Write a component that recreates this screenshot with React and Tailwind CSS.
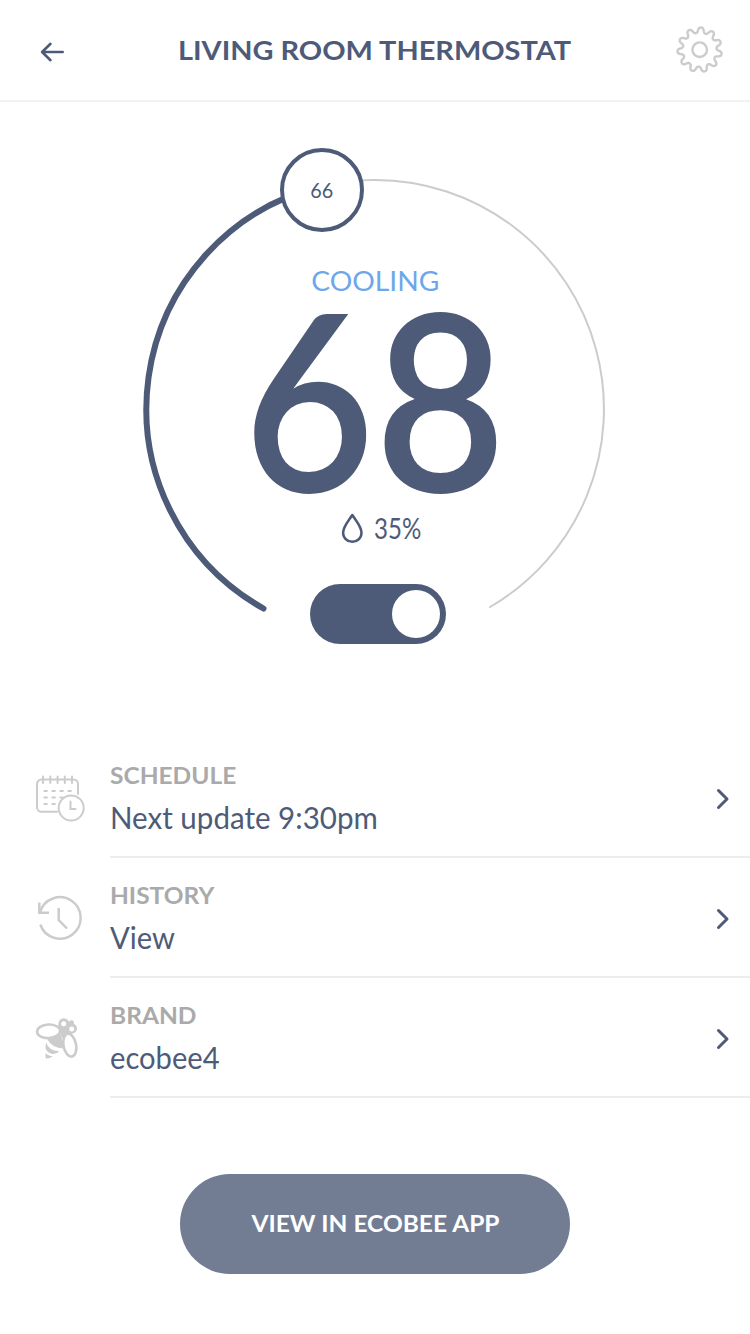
import React from "react";

function BackArrow() {
  return (
    <svg width="26" height="22" viewBox="0 0 26 22" fill="none" stroke="#4e5b78" strokeWidth="2.6" strokeLinecap="round" strokeLinejoin="round">
      <path d="M23.700 11H3.500M11.500 2.800L3.100 11L11.500 19.200" />
    </svg>
  );
}

function gearPath() {
  const pts = [];
  for (let i = 0; i <= 264; i++) {
    const t = (i / 264) * Math.PI * 2;
    const wave = Math.cos(11 * t);
    const r = 19.6 + 2.7 * wave;
    const a = t - Math.PI / 2 + 0.06 + 0.02 * Math.sin(22 * t);
    pts.push(`${(23.7 + r * Math.cos(a)).toFixed(2)} ${(23.7 + r * Math.sin(a)).toFixed(2)}`);
  }
  return "M" + pts.join("L") + "Z";
}

function Gear() {
  return (
    <svg width="48" height="48" viewBox="0 0 48 48" fill="none" stroke="#cccccc" strokeWidth="2.4" strokeLinejoin="round">
      <path d={gearPath()} />
      <circle cx="23.700" cy="23.700" r="7.300" />
    </svg>
  );
}

function CalendarIcon() {
  return (
    <svg width="50" height="50" viewBox="0 0 50 50" fill="none" stroke="#cccccc" strokeWidth="2" strokeLinecap="round">
      <path d="M22 36.800H6.500a4.500 4.500 0 0 1-4.500-4.500V9A4.500 4.500 0 0 1 6.500 4.500H38.500A4.500 4.500 0 0 1 43 9V19" />
      <path d="M8 1.500V8M15.300 1.500V8M22.600 1.500V8M29.800 1.500V8M37 1.500V8" />
      <path d="M9.300 16h2.600M17.300 16h2.600M25.300 16h2.600M33.300 16h2.600M9.300 22.500h2.600M17.300 22.500h2.600M25.300 22.500h2.600M9.300 29h2.600M17.300 29h2.600" />
      <circle cx="36.200" cy="33" r="12.500" fill="white" />
      <path d="M35.500 26.500V34h5" />
    </svg>
  );
}

function HistoryIcon() {
  return (
    <svg width="50" height="50" viewBox="0 0 50 50" fill="none" stroke="#cccccc" strokeWidth="2.500">
      <path d="M5 17.300A20.700 20.700 0 1 1 5.300 29.500" />
      <path d="M4.300 7.500V17.700H14" />
      <path d="M23.700 13V25L32 33.500" />
    </svg>
  );
}

function BeeIcon() {
  return (
    <svg width="50" height="50" viewBox="0 0 50 50" fill="#cccccc">
      <circle cx="28.800" cy="8.500" r="5.300" />
      <circle cx="37" cy="13.500" r="5" />
      <circle cx="36.500" cy="7.700" r="2.500" />
      <path d="M23 10L30 5L38 8L40 17L35 20L27 23Z" />
      <circle cx="28.700" cy="8.700" r="2.500" fill="white" />
      <circle cx="36.700" cy="14" r="2.500" fill="white" />
      <path d="M12.500 24.500L26 19L28.500 33.500Q17 33 12.500 24.500Z" />
      <path d="M11.300 27.700Q13.500 35.500 24.300 36.200Q20 40.500 14.500 38Q8.500 34.500 11.300 27.700Z" />
      <path d="M10.800 38Q13 41 17.800 41.300Q15 43.500 11 43.500Q9.800 41 10.800 38Z" />
      <ellipse cx="13.600" cy="16.300" rx="11.500" ry="6.800" fill="white" stroke="#cccccc" strokeWidth="2.600" transform="rotate(-3 13.600 16.300)" />
      <ellipse cx="34.800" cy="30.200" rx="6.300" ry="11.600" fill="white" stroke="#cccccc" strokeWidth="2.600" transform="rotate(-11 34.800 30.200)" />
    </svg>
  );
}

function Chevron() {
  return (
    <svg width="16" height="24" viewBox="0 0 16 24" fill="none" stroke="#4e5b78" strokeWidth="3" strokeLinecap="round" strokeLinejoin="round">
      <path d="M3.500 3.500L12 12L3.500 20.500" />
    </svg>
  );
}

function Row({ icon, label, value, valueClass }) {
  return (
    <div className="flex h-[120px] pl-[35px]">
      <div className="w-[75px] shrink-0 pt-[37px]">{icon}</div>
      <div className="flex flex-1 items-center justify-between border-b-2 border-[#ededed] pr-[19px] pt-1">
        <div className="-mt-0.5 flex flex-col items-start">
          <span className="h-[38px] origin-left scale-x-[1.065] text-[23px] leading-[38px] font-bold whitespace-nowrap text-[#aaaaaa]">{label}</span>
          <span className={"h-[46px] origin-left text-[31px] leading-[46px] whitespace-nowrap " + valueClass}>{value}</span>
        </div>
        <Chevron />
      </div>
    </div>
  );
}

export default function App() {
  return (
    <div className="flex h-[1334px] w-[750px] flex-col overflow-hidden bg-white font-['Lato',sans-serif] text-[#4e5b78]">
      <header className="flex h-[102px] shrink-0 items-center justify-between border-b-2 border-[#f2f2f2] pr-[26px] pl-[39px]">
        <div className="w-[35px] pt-1"><BackArrow /></div>
        <h1 className="scale-x-[1.071] text-[27px] leading-10 font-bold whitespace-nowrap">LIVING ROOM THERMOSTAT</h1>
        <div><Gear /></div>
      </header>

      <section className="relative flex h-[636px] shrink-0 flex-col items-center">
        <svg className="absolute inset-0" width="750" height="636" viewBox="0 102 750 636" fill="none" strokeLinecap="round">
          <path d="M322 186A229 229 0 0 1 375 180A229 229 0 0 1 490 607" stroke="#cccccc" strokeWidth="2" />
          <path d="M263.500 608.500A229 229 0 0 1 322 186" stroke="#4e5b78" strokeWidth="6" />
        </svg>
        <div className="absolute top-[46px] left-[280px] flex h-[84px] w-[84px] items-center justify-center rounded-full border-4 border-[#4e5b78] bg-white pb-0.5 text-[22px]">
          <span className="scale-x-90">66</span>
        </div>
        <div className="mt-[159px] h-10 scale-x-[1.045] text-[27px] leading-10 text-[#6ea6ec]">COOLING</div>
        <div className="h-[205px] scale-x-[0.92] pt-px text-[246px] leading-[190px] font-semibold">68</div>
        <div className="relative flex h-[44px] items-center gap-[10px] pl-[19px] text-[28px]">
          <svg width="24" height="32" viewBox="0 0 24 32" fill="none" stroke="#4e5b78" strokeWidth="2.500" strokeLinejoin="round">
            <path d="M12.300 3C8.800 8.500 3.100 14.500 3.100 20.800C3.100 26 7.300 29.800 12.300 29.800S21.500 26 21.500 20.800C21.500 14.500 15.800 8.500 12.300 3Z" />
          </svg>
          <span className="origin-left scale-x-86">35%</span>
        </div>
        <div className="mt-[34px] ml-[6px] flex h-[60px] w-[136px] items-center justify-end rounded-full bg-[#4e5b78] pr-1.5">
          <div className="h-12 w-12 rounded-full bg-white" />
        </div>
      </section>

      <section className="shrink-0">
        <Row icon={<CalendarIcon />} label="SCHEDULE" value="Next update 9:30pm" valueClass="scale-x-[0.953]" />
        <Row icon={<HistoryIcon />} label="HISTORY" value="View" valueClass="scale-x-[0.94]" />
        <Row icon={<BeeIcon />} label="BRAND" value="ecobee4" valueClass="scale-x-[0.94]" />
      </section>

      <button className="mt-[76px] flex h-[100px] w-[390px] shrink-0 items-center justify-center self-center rounded-full bg-[#727d94] pb-0.5 text-[23px] font-bold text-white">
        <span className="scale-x-[1.065]">VIEW IN ECOBEE APP</span>
      </button>
    </div>
  );
}
